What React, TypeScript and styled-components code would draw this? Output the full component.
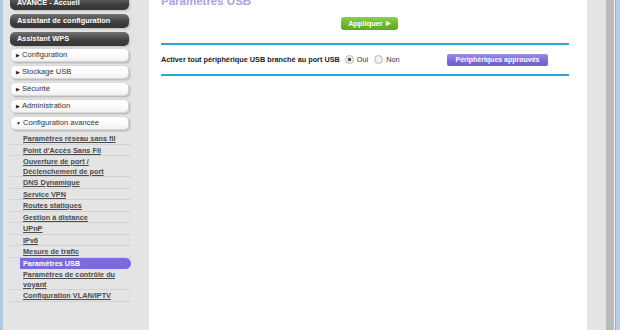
import React from "react";
import styled, { createGlobalStyle } from "styled-components";

const Global = createGlobalStyle`
  html, body { margin: 0; padding: 0; }
  body { width: 620px; height: 330px; overflow: hidden; font-family: "Liberation Sans", Arial, sans-serif; background: #fff; }
`;

const Page = styled.div`
  display: flex;
  width: 620px;
  height: 330px;
  overflow: hidden;
`;

const Sidebar = styled.nav`
  width: 139px;
  flex: none;
  background: #e4e4e4;
  border-left: 3px solid #b3c9e2;
  padding-left: 7px;
  box-sizing: content-box;
`;

const MenuList = styled.div`
  display: flex;
  flex-direction: column;
  margin-top: -4px;
  width: 119px;
`;

const DarkButton = styled.div<{ $last?: boolean }>`
  height: 14px;
  margin-bottom: ${(p) => (p.$last ? "2px" : "4px")};
  border-radius: 5px;
  background: linear-gradient(#727272, #3e3e3e 60%, #353535);
  box-shadow: 1px 1px 0 #c8c8c8, 2px 2px 1px #d6d6d6;
  color: #fff;
  font-weight: bold;
  font-size: 7.4px;
  line-height: 14px;
  padding-left: 7px;
  white-space: nowrap;
`;

const LightButton = styled.div`
  height: 12px;
  margin-bottom: 3px;
  border-radius: 5px;
  background: linear-gradient(#ffffff, #fbfbfb 60%, #f0f0f0);
  border: 1px solid #d8d8d8;
  box-shadow: 1px 1px 0 #bdbdbd, 2px 2px 1px #cfcfcf;
  color: #333;
  font-size: 7.6px;
  line-height: 12px;
  padding-left: 5px;
  white-space: nowrap;
  display: flex;
  align-items: center;
  gap: 2px;
`;

const Caret = styled.span`
  font-size: 5px;
  color: #222;
`;

const SubMenu = styled.div`
  display: flex;
  flex-direction: column;
  width: 121px;
`;

const SubItem = styled.div<{ $active?: boolean }>`
  font-size: 7.3px;
  line-height: 9.5px;
  font-weight: bold;
  padding-top: 1px;
  border-bottom: 1px solid ${(p) => (p.$active ? "transparent" : "#d2d2d2")};
  color: ${(p) => (p.$active ? "#fff" : "#4a4a4a")};
  text-decoration: ${(p) => (p.$active ? "none" : "underline")};
  background: ${(p) => (p.$active ? "#7b6bd8" : "transparent")};
  margin-left: ${(p) => (p.$active ? "10px" : "0")};
  padding-left: ${(p) => (p.$active ? "3px" : "13px")};
  border-radius: ${(p) => (p.$active ? "0 7px 7px 0" : "0")};
  white-space: nowrap;
`;

const Main = styled.main`
  width: 426px;
  flex: none;
  background: #fff;
  padding-left: 12px;
  display: flex;
  flex-direction: column;
`;

const Title = styled.div`
  margin-top: -5px;
  font-size: 11.5px;
  font-weight: bold;
  color: #a7a3e2;
  height: 15px;
`;

const ApplyRow = styled.div`
  width: 408px;
  display: flex;
  justify-content: center;
  margin-top: 7px;
  padding-left: 9px;
  box-sizing: border-box;
`;

const ApplyButton = styled.div`
  width: 57px;
  height: 13px;
  border-radius: 3px;
  background: linear-gradient(#8fd04a, #6db82c 55%, #5fa824);
  color: #fff;
  font-size: 7.4px;
  font-weight: bold;
  line-height: 13px;
  display: flex;
  justify-content: center;
  align-items: center;
  gap: 3px;
`;

const Arrow = styled.span`
  font-size: 5.5px;
`;

const Divider = styled.div`
  width: 408px;
  height: 2px;
  background: #2ea6da;
`;

const FirstDivider = styled(Divider)`
  margin-top: 13px;
`;

const SettingRow = styled.div`
  width: 408px;
  height: 29px;
  display: flex;
  align-items: center;
  font-size: 7.3px;
  color: #222;
`;

const Label = styled.span`
  font-weight: bold;
  flex: none;
  margin-right: 5px;
  white-space: nowrap;
  color: #222;
`;

const RadioLabel = styled.label`
  display: flex;
  align-items: center;
  gap: 3px;
  margin-right: 6px;
  color: #333;
`;

const RadioDot = styled.span<{ $checked?: boolean }>`
  width: 7px;
  height: 7px;
  border-radius: 50%;
  border: 1px solid #b8b8b8;
  background: radial-gradient(circle, ${(p) => (p.$checked ? "#555 0 1.6px, #f4f4f4 2.2px" : "#fafafa 0, #e6e6e6 100%")});
  box-sizing: content-box;
`;

const PurpleButton = styled.div`
  margin-left: auto;
  margin-right: 21px;
  width: 101px;
  height: 12px;
  border-radius: 2px;
  background: linear-gradient(#9b8ee4, #7a69d2 60%, #6f5fc8);
  color: #fff;
  font-weight: bold;
  font-size: 7px;
  line-height: 12px;
  text-align: center;
`;

const Gutter = styled.div`
  width: 19px;
  flex: none;
  background: #e4e4e4;
`;

const ScrollTrack = styled.div`
  width: 8px;
  flex: none;
  background: #bababa;
  border-right: 1px solid #f0f0f0;
`;

const FrameEdge = styled.div`
  flex: 1;
  background: linear-gradient(90deg, #8fb0d8 0 1px, #b6cde9 1px);
`;

const subItems: { label: string[]; active?: boolean }[] = [
  { label: ["Paramètres réseau sans fil"] },
  { label: ["Point d'Accès Sans Fil"] },
  { label: ["Ouverture de port /", "Déclenchement de port"] },
  { label: ["DNS Dynamique"] },
  { label: ["Service VPN"] },
  { label: ["Routes statiques"] },
  { label: ["Gestion à distance"] },
  { label: ["UPnP"] },
  { label: ["IPv6"] },
  { label: ["Mesure de trafic"] },
  { label: ["Paramètres USB"], active: true },
  { label: ["Paramètres de contrôle du", "voyant"] },
  { label: ["Configuration VLAN/IPTV"] },
];

export default function App() {
  return (
    <>
      <Global />
      <Page>
        <Sidebar>
          <MenuList>
            <DarkButton>AVANCE - Accueil</DarkButton>
            <DarkButton>Assistant de configuration</DarkButton>
            <DarkButton $last>Assistant WPS</DarkButton>
            <LightButton><Caret>▶</Caret>Configuration</LightButton>
            <LightButton><Caret>▶</Caret>Stockage USB</LightButton>
            <LightButton><Caret>▶</Caret>Sécurité</LightButton>
            <LightButton><Caret>▶</Caret>Administration</LightButton>
            <LightButton><Caret>▼</Caret>Configuration avancée</LightButton>
          </MenuList>
          <SubMenu>
            {subItems.map((it, i) => (
              <SubItem key={i} $active={it.active}>
                {it.label.map((l, j) => (
                  <div key={j}>{l}</div>
                ))}
              </SubItem>
            ))}
          </SubMenu>
        </Sidebar>
        <Main>
          <Title>Paramètres USB</Title>
          <ApplyRow>
            <ApplyButton>Appliquer <Arrow>▶</Arrow></ApplyButton>
          </ApplyRow>
          <FirstDivider />
          <SettingRow>
            <Label>Activer tout périphérique USB branché au port USB</Label>
            <RadioLabel><RadioDot $checked />Oui</RadioLabel>
            <RadioLabel><RadioDot />Non</RadioLabel>
            <PurpleButton>Périphériques approuvés</PurpleButton>
          </SettingRow>
          <Divider />
        </Main>
        <Gutter />
        <ScrollTrack />
        <FrameEdge />
      </Page>
    </>
  );
}
